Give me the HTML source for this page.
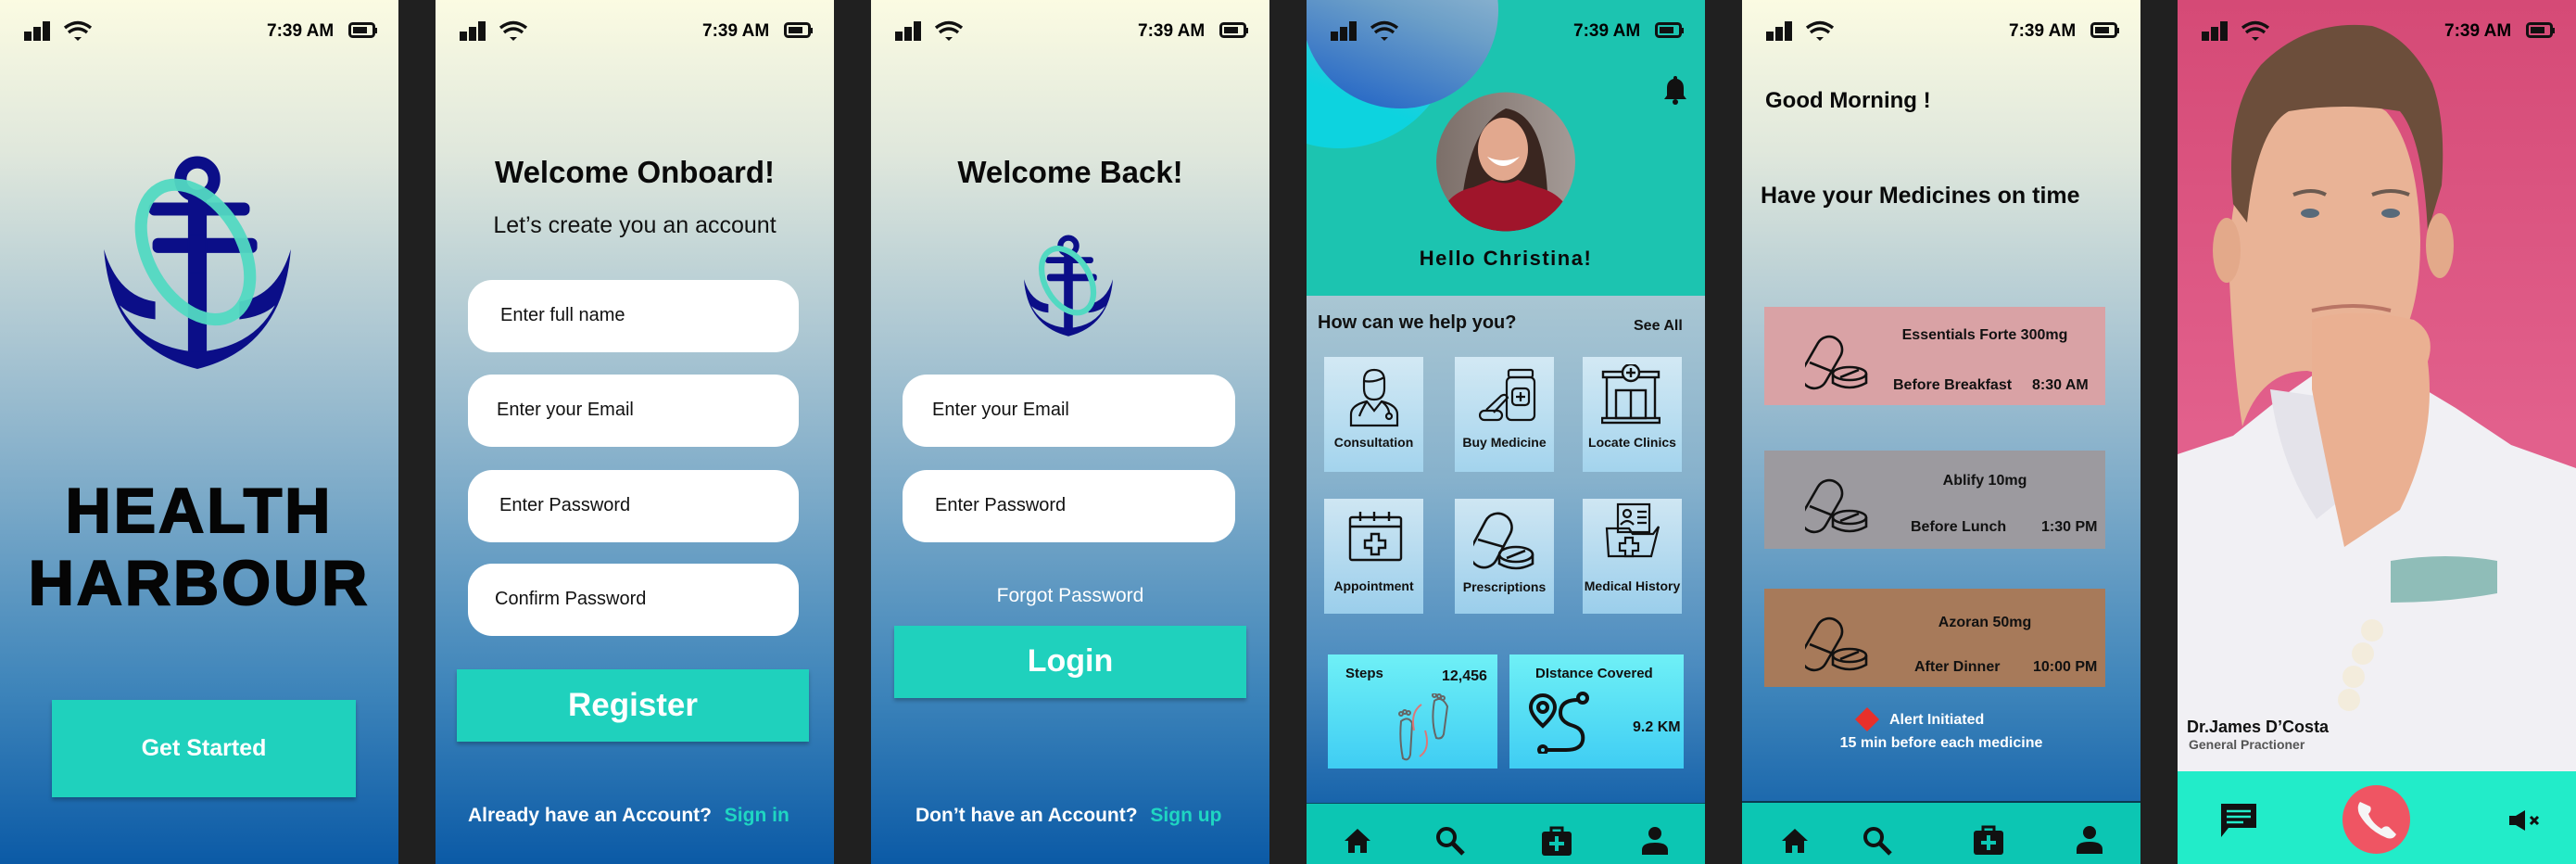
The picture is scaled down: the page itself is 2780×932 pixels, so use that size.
<!DOCTYPE html>
<html><head><meta charset="utf-8"><style>
*{margin:0;padding:0;box-sizing:border-box}
body{width:2780px;height:932px;background:#202020;position:relative;overflow:hidden;font-family:"Liberation Sans",sans-serif}
.s{position:absolute;top:0;height:932px;width:430px;overflow:hidden}
.g{background:linear-gradient(180deg,#fbfbe2 0%,#dfe7dc 18%,#a9c5d2 40%,#7aa9c8 58%,#3d84ba 80%,#0b5aa6 100%)}
.a{position:absolute}
.t{position:absolute;font-weight:bold;white-space:nowrap}
.inp{position:absolute;background:#fff;border-radius:26px;height:78px;width:357px}
.inp span{position:absolute;top:27px;font-size:20px;color:#111}
.btn{position:absolute;background:#1fd1bd;box-shadow:0 3px 4px rgba(0,0,0,.25);color:#fff;font-weight:bold;text-align:center}
.card{position:absolute;width:107px;height:124px;background:linear-gradient(180deg,rgba(220,240,250,.85),rgba(170,220,245,.8))}
.card b{position:absolute;left:0;right:0;text-align:center;font-size:14px;color:#111}
.card svg{position:absolute;left:26px;top:12px}
.med{position:absolute;left:24px;width:368px;height:106px}
.med b{position:absolute;font-size:16px;color:#111}
.hh{position:absolute;left:0;width:430px;text-align:center;font-size:68px;font-weight:900;letter-spacing:3px;white-space:nowrap;color:#050505;-webkit-text-stroke:2px #050505}
</style></head><body>

<!-- SCREEN 1 -->
<div class="s g" style="left:0">
 <svg class="a" style="left:26px;top:22px" width="82" height="24" viewBox="0 0 82 24"><rect x="0" y="12" width="8" height="10" fill="#111"/><rect x="10" y="7" width="8" height="15" fill="#111"/><rect x="20" y="1" width="8" height="21" fill="#111"/><path d="M44 8 Q58 -3 72 8" stroke="#111" stroke-width="3.5" fill="none"/><path d="M48 13 Q58 5 68 13" stroke="#111" stroke-width="3.5" fill="none"/><path d="M54 18 L58 22 L62 18 Z" fill="#111"/></svg>
 <div class="t" style="left:288px;top:23px;font-size:19px">7:39 AM</div>
 <svg class="a" style="left:376px;top:24px" width="32" height="18"><rect x="1.5" y="1.5" width="26" height="14" rx="3" stroke="#111" stroke-width="3" fill="none"/><rect x="5" y="5" width="15" height="7" fill="#111"/><rect x="28" y="6" width="3" height="6" fill="#111"/></svg>
 <svg class="a" style="left:112px;top:168px" width="202" height="230" viewBox="0 0 200 228">
  <circle cx="100" cy="25" r="18" stroke="#0b0e88" stroke-width="13" fill="none"/>
  <rect x="48" y="50" width="108" height="14" rx="6" fill="#0b0e88"/>
  <rect x="52" y="88" width="112" height="16" rx="6" fill="#0b0e88"/>
  <rect x="90" y="40" width="20" height="180" fill="#0b0e88"/>
  <path d="M0 100 Q8 205 100 228 Q192 205 200 100 Q185 150 145 156 L145 175 Q170 172 183 160 Q160 205 100 210 Q40 205 17 160 Q30 172 55 175 L55 156 Q15 150 0 100 Z" fill="#0b0e88"/>
  <ellipse cx="98" cy="103" rx="50" ry="78" transform="rotate(-30 98 103)" stroke="#52d9c2" stroke-width="13" fill="none" opacity=".95"/>
  <rect x="92" y="85" width="16" height="40" fill="#0b0e88"/>
 </svg>
 <div class="hh" style="top:512px">HEALTH</div>
 <div class="hh" style="top:590px">HARBOUR</div>
 <div class="btn" style="left:56px;top:755px;width:328px;height:105px;line-height:105px;font-size:25px">Get Started</div>
</div>

<!-- SCREEN 2 -->
<div class="s g" style="left:470px">
 <svg class="a" style="left:26px;top:22px" width="82" height="24" viewBox="0 0 82 24"><rect x="0" y="12" width="8" height="10" fill="#111"/><rect x="10" y="7" width="8" height="15" fill="#111"/><rect x="20" y="1" width="8" height="21" fill="#111"/><path d="M44 8 Q58 -3 72 8" stroke="#111" stroke-width="3.5" fill="none"/><path d="M48 13 Q58 5 68 13" stroke="#111" stroke-width="3.5" fill="none"/><path d="M54 18 L58 22 L62 18 Z" fill="#111"/></svg>
 <div class="t" style="left:288px;top:23px;font-size:19px">7:39 AM</div>
 <svg class="a" style="left:376px;top:24px" width="32" height="18"><rect x="1.5" y="1.5" width="26" height="14" rx="3" stroke="#111" stroke-width="3" fill="none"/><rect x="5" y="5" width="15" height="7" fill="#111"/><rect x="28" y="6" width="3" height="6" fill="#111"/></svg>
 <div class="t" style="left:0;width:430px;text-align:center;top:167px;font-size:33px;color:#0a0a0a">Welcome Onboard!</div>
 <div class="t" style="left:0;width:430px;text-align:center;top:229px;font-size:25px;font-weight:normal;color:#111">Let’s create you an account</div>
 <div class="inp" style="left:35px;top:302px"><span style="left:35px">Enter full name</span></div>
 <div class="inp" style="left:35px;top:404px"><span style="left:31px">Enter your Email</span></div>
 <div class="inp" style="left:35px;top:507px"><span style="left:34px">Enter Password</span></div>
 <div class="inp" style="left:35px;top:608px"><span style="left:29px">Confirm Password</span></div>
 <div class="btn" style="left:23px;top:722px;width:380px;height:78px;line-height:78px;font-size:35px">Register</div>
 <div class="t" style="left:35px;top:868px;font-size:21px;color:#fff">Already have an Account? <span style="color:#1fd6c2;margin-left:8px">Sign in</span></div>
</div>

<!-- SCREEN 3 -->
<div class="s g" style="left:940px">
 <svg class="a" style="left:26px;top:22px" width="82" height="24" viewBox="0 0 82 24"><rect x="0" y="12" width="8" height="10" fill="#111"/><rect x="10" y="7" width="8" height="15" fill="#111"/><rect x="20" y="1" width="8" height="21" fill="#111"/><path d="M44 8 Q58 -3 72 8" stroke="#111" stroke-width="3.5" fill="none"/><path d="M48 13 Q58 5 68 13" stroke="#111" stroke-width="3.5" fill="none"/><path d="M54 18 L58 22 L62 18 Z" fill="#111"/></svg>
 <div class="t" style="left:288px;top:23px;font-size:19px">7:39 AM</div>
 <svg class="a" style="left:376px;top:24px" width="32" height="18"><rect x="1.5" y="1.5" width="26" height="14" rx="3" stroke="#111" stroke-width="3" fill="none"/><rect x="5" y="5" width="15" height="7" fill="#111"/><rect x="28" y="6" width="3" height="6" fill="#111"/></svg>
 <div class="t" style="left:0;width:430px;text-align:center;top:167px;font-size:33px;color:#0a0a0a">Welcome Back!</div>
 <svg class="a" style="left:165px;top:253px" width="96" height="110" viewBox="0 0 200 228">
  <circle cx="100" cy="25" r="18" stroke="#0b0e88" stroke-width="13" fill="none"/>
  <rect x="48" y="50" width="108" height="14" rx="6" fill="#0b0e88"/>
  <rect x="52" y="88" width="112" height="16" rx="6" fill="#0b0e88"/>
  <rect x="90" y="40" width="20" height="180" fill="#0b0e88"/>
  <path d="M0 100 Q8 205 100 228 Q192 205 200 100 Q185 150 145 156 L145 175 Q170 172 183 160 Q160 205 100 210 Q40 205 17 160 Q30 172 55 175 L55 156 Q15 150 0 100 Z" fill="#0b0e88"/>
  <ellipse cx="98" cy="103" rx="50" ry="78" transform="rotate(-30 98 103)" stroke="#52d9c2" stroke-width="13" fill="none"/>
 </svg>
 <div class="inp" style="left:34px;top:404px;width:359px"><span style="left:32px">Enter your Email</span></div>
 <div class="inp" style="left:34px;top:507px;width:359px"><span style="left:35px">Enter Password</span></div>
 <div class="t" style="left:0;width:430px;text-align:center;top:631px;font-size:21px;font-weight:normal;color:#fff">Forgot Password</div>
 <div class="btn" style="left:25px;top:675px;width:380px;height:78px;line-height:76px;font-size:34px">Login</div>
 <div class="t" style="left:48px;top:868px;font-size:21px;color:#fff">Don’t have an Account? <span style="color:#1fd6c2;margin-left:8px">Sign up</span></div>
</div>

<!-- SCREEN 4 -->
<div class="s" style="left:1410px;background:linear-gradient(180deg,#a9c6d3 320px,#86b1cc 520px,#4b8bbf 720px,#1864ab 866px)">
 <div class="a" style="left:0;top:0;width:430px;height:319px;background:#1cc4b0"></div>
 <div class="a" style="left:-90px;top:-90px;width:250px;height:250px;border-radius:50%;background:linear-gradient(200deg,#8fb7d6,#0dd3df 70%)"></div>
 <div class="a" style="left:-5px;top:-95px;width:212px;height:212px;border-radius:50%;background:linear-gradient(200deg,#a8c5d5 10%,#6c9fc8 50%,#1a5ec6 100%)"></div>
 <svg class="a" style="left:26px;top:22px" width="82" height="24" viewBox="0 0 82 24"><rect x="0" y="12" width="8" height="10" fill="#111"/><rect x="10" y="7" width="8" height="15" fill="#111"/><rect x="20" y="1" width="8" height="21" fill="#111"/><path d="M44 8 Q58 -3 72 8" stroke="#111" stroke-width="3.5" fill="none"/><path d="M48 13 Q58 5 68 13" stroke="#111" stroke-width="3.5" fill="none"/><path d="M54 18 L58 22 L62 18 Z" fill="#111"/></svg>
 <div class="t" style="left:288px;top:23px;font-size:19px">7:39 AM</div>
 <svg class="a" style="left:376px;top:24px" width="32" height="18"><rect x="1.5" y="1.5" width="26" height="14" rx="3" stroke="#111" stroke-width="3" fill="none"/><rect x="5" y="5" width="15" height="7" fill="#111"/><rect x="28" y="6" width="3" height="6" fill="#111"/></svg>
 <svg class="a" style="left:385px;top:80px" width="26" height="34" viewBox="0 0 26 34"><path d="M13 2 a2 2 0 0 1 2 2 v1 c5 1.5 7 5 7 10 v8 l3 4 H1 l3 -4 v-8 c0 -5 2 -8.5 7 -10 V4 a2 2 0 0 1 2 -2z" fill="#111"/><circle cx="13" cy="30" r="3" fill="#111"/></svg>
 <svg class="a" style="left:140px;top:99px" width="150" height="151" viewBox="0 0 150 151">
  <defs><clipPath id="cp"><circle cx="75" cy="75.5" r="75"/></clipPath><linearGradient id="bgp" x1="0" y1="0" x2="1" y2="0"><stop offset="0" stop-color="#7c6f69"/><stop offset="1" stop-color="#a49a96"/></linearGradient></defs>
  <g clip-path="url(#cp)"><rect width="150" height="151" fill="url(#bgp)"/>
  <path d="M25 151 Q30 40 75 18 Q125 25 120 151Z" fill="#3a2620"/>
  <ellipse cx="72" cy="62" rx="27" ry="34" fill="#e2a88e"/>
  <path d="M55 70 Q72 90 90 70 Q72 78 55 70Z" fill="#fff"/>
  <path d="M0 151 Q5 110 40 103 L60 95 Q75 102 88 95 L110 103 Q145 112 150 151Z" fill="#a0152b"/></g>
 </svg>
 <div class="t" style="left:0;width:430px;text-align:center;top:266px;font-size:22px;letter-spacing:1.5px;color:#0a0a0a">Hello Christina!</div>
 <div class="t" style="left:12px;top:337px;font-size:20px;color:#111">How can we help you?</div>
 <div class="t" style="left:353px;top:343px;font-size:16px;color:#111">See All</div>

 <div class="card" style="left:19px;top:385px"><svg width="56" height="64" viewBox="0 0 56 64" fill="none" stroke="#111" stroke-width="2.2"><path d="M17 14 Q17 2 28 2 Q39 2 39 14 V22 Q39 34 28 34 Q17 34 17 22Z"/><path d="M17 14 Q28 16 39 10"/><path d="M3 62 V50 Q3 40 20 36 L28 46 L36 36 Q53 40 53 50 V62Z"/><path d="M20 36 Q14 46 12 52"/><circle cx="44" cy="52" r="3"/><path d="M36 36 Q44 42 44 49"/></svg><b style="top:84px">Consultation</b></div>
 <div class="card" style="left:160px;top:385px"><svg width="64" height="60" viewBox="0 0 64 60" fill="none" stroke="#111" stroke-width="2.2"><rect x="32" y="2" width="26" height="8" rx="2"/><rect x="30" y="10" width="30" height="46" rx="5"/><rect x="36" y="22" width="18" height="18" rx="4"/><path d="M45 26 v10 M40 31 h10"/><path d="M8 45 L24 30 Q29 27 31 32 L16 48"/><rect x="1" y="46" width="24" height="10" rx="5"/></svg><b style="top:84px">Buy Medicine</b></div>
 <div class="card" style="left:298px;top:385px"><svg width="64" height="66" viewBox="0 0 64 66" fill="none" stroke="#111" stroke-width="2.4" style="left:20px;top:8px"><rect x="2" y="8" width="60" height="6"/><circle cx="32" cy="9" r="9" fill="#cde8f4"/><path d="M32 4 v10 M27 9 h10"/><path d="M6 14 V58 M58 14 V58"/><rect x="16" y="28" width="32" height="30"/><path d="M32 28 V58"/><rect x="1" y="58" width="62" height="5"/></svg><b style="top:84px">Locate Clinics</b></div>
 <div class="card" style="left:19px;top:538px"><svg width="60" height="58" viewBox="0 0 60 58" fill="none" stroke="#111" stroke-width="2.4"><rect x="2" y="8" width="55" height="46" rx="2"/><path d="M2 18 H57"/><path d="M13 2 v10 M28 2 v10 M44 2 v10"/><path d="M25 26 h8 v7 h7 v8 h-7 v7 h-8 v-7 h-7 v-8 h7z"/></svg><b style="top:86px">Appointment</b></div>
 <div class="card" style="left:160px;top:538px"><svg width="66" height="66" viewBox="0 0 66 66" fill="none" stroke="#111" stroke-width="2.6" style="left:20px;top:12px"><rect x="4" y="2" width="30" height="62" rx="15" transform="rotate(28 19 33)"/><path d="M5 32 L33 40"/><ellipse cx="46" cy="48" rx="18" ry="8"/><path d="M28 48 v10 Q46 68 64 58 V48"/><path d="M36 52 L56 44"/></svg><b style="top:87px">Prescriptions</b></div>
 <div class="card" style="left:298px;top:538px"><svg width="60" height="60" viewBox="0 0 60 60" fill="none" stroke="#111" stroke-width="2.2" style="left:24px;top:4px"><rect x="14" y="2" width="34" height="30"/><circle cx="24" cy="12" r="4"/><path d="M17 24 Q24 16 31 24 M35 10 h10 M35 16 h10 M35 22 h10"/><path d="M2 28 H26 L30 34 H52 L58 26 L50 58 H4Z"/><path d="M22 38 h8 v6 h6 v8 h-6 v6 h-8 v-6 h-6 v-8 h6z"/></svg><b style="top:86px">Medical History</b></div>

 <div class="a" style="left:23px;top:706px;width:183px;height:123px;background:linear-gradient(180deg,#6ff0f6,#3fcdf3)"></div>
 <div class="t" style="left:42px;top:718px;font-size:15px;color:#111">Steps</div>
 <div class="t" style="left:146px;top:721px;font-size:16px;color:#111">12,456</div>
 <svg class="a" style="left:96px;top:748px" width="66" height="74" viewBox="0 0 66 74" fill="none" stroke="#666" stroke-width="2"><path d="M6 30 Q4 50 8 70 Q14 74 16 66 L18 32 Q14 24 6 30Z"/><path d="M42 8 Q38 30 44 48 Q50 50 52 44 L56 14 Q50 2 42 8Z"/><circle cx="6" cy="22" r="2"/><circle cx="10" cy="20" r="2"/><circle cx="14" cy="21" r="2"/><circle cx="42" cy="2" r="2"/><circle cx="47" cy="3" r="2"/><circle cx="51" cy="5" r="2"/><path d="M28 12 Q16 20 20 40 M32 40 Q38 60 26 68" stroke="#d77" /></svg>
 <div class="a" style="left:219px;top:706px;width:188px;height:123px;background:linear-gradient(180deg,#6ff0f6,#3fcdf3)"></div>
 <div class="t" style="left:247px;top:718px;font-size:15px;color:#111">DIstance Covered</div>
 <svg class="a" style="left:240px;top:745px" width="75" height="68" viewBox="0 0 75 68" fill="none" stroke="#111" stroke-width="4"><path d="M15 38 Q2 26 2 18 a13 13 0 0 1 26 0 Q28 26 15 38Z"/><circle cx="15" cy="18" r="5"/><circle cx="58" cy="8" r="5"/><path d="M53 10 Q34 10 34 24 Q34 34 48 38 Q60 42 58 54 Q56 64 40 64 H20"/><circle cx="15" cy="64" r="4"/></svg>
 <div class="t" style="left:352px;top:776px;font-size:16px;color:#111">9.2 KM</div>

 <div class="a" style="left:0;top:866px;width:430px;height:66px;background:#0cc6b3;border-top:1px solid #0a4a60"></div>
 <svg class="a" style="left:40px;top:893px" width="30" height="28" viewBox="0 0 30 28"><path d="M15 1 L1 14 H5 V27 H12 V19 H18 V27 H25 V14 H29Z" fill="#111"/></svg>
 <svg class="a" style="left:139px;top:891px" width="32" height="32" viewBox="0 0 32 32" fill="none" stroke="#111" stroke-width="4"><circle cx="12" cy="12" r="9"/><path d="M19 19 L30 30" stroke-width="5"/></svg>
 <svg class="a" style="left:253px;top:890px" width="34" height="34" viewBox="0 0 34 34"><path d="M11 7 V3 H23 V7" stroke="#111" stroke-width="3" fill="none"/><rect x="1" y="7" width="32" height="26" rx="3" fill="#111"/><path d="M17 12 v16 M9 20 h16" stroke="#0cc6b3" stroke-width="4"/></svg>
 <svg class="a" style="left:361px;top:891px" width="30" height="32" viewBox="0 0 30 32"><circle cx="15" cy="8" r="7" fill="#111"/><path d="M1 31 V26 Q1 18 15 18 Q29 18 29 26 V31Z" fill="#111"/></svg>
</div>

<!-- SCREEN 5 -->
<div class="s g" style="left:1880px">
 <svg class="a" style="left:26px;top:22px" width="82" height="24" viewBox="0 0 82 24"><rect x="0" y="12" width="8" height="10" fill="#111"/><rect x="10" y="7" width="8" height="15" fill="#111"/><rect x="20" y="1" width="8" height="21" fill="#111"/><path d="M44 8 Q58 -3 72 8" stroke="#111" stroke-width="3.5" fill="none"/><path d="M48 13 Q58 5 68 13" stroke="#111" stroke-width="3.5" fill="none"/><path d="M54 18 L58 22 L62 18 Z" fill="#111"/></svg>
 <div class="t" style="left:288px;top:23px;font-size:19px">7:39 AM</div>
 <svg class="a" style="left:376px;top:24px" width="32" height="18"><rect x="1.5" y="1.5" width="26" height="14" rx="3" stroke="#111" stroke-width="3" fill="none"/><rect x="5" y="5" width="15" height="7" fill="#111"/><rect x="28" y="6" width="3" height="6" fill="#111"/></svg>
 <div class="t" style="left:25px;top:95px;font-size:24px;color:#0a0a0a">Good Morning !</div>
 <div class="t" style="left:20px;top:197px;font-size:25px;color:#0a0a0a">Have your Medicines on time</div>

 <div class="med" style="top:331px;background:#d9a2a5"><svg class="a" style="left:44px;top:28px" width="68" height="64" viewBox="0 0 68 64" fill="none" stroke="#111" stroke-width="2.6"><rect x="4" y="2" width="28" height="60" rx="14" transform="rotate(30 18 32)"/><path d="M5 32 L30 42"/><ellipse cx="48" cy="44" rx="18" ry="7"/><path d="M30 44 v10 Q48 64 66 54 V44"/><path d="M38 48 L58 40"/></svg><b style="left:0;width:476px;text-align:center;top:22px">Essentials Forte 300mg</b><b style="left:139px;top:76px">Before Breakfast</b><b style="left:289px;top:76px">8:30 AM</b></div>
 <div class="med" style="top:486px;background:#9c9a9f"><svg class="a" style="left:44px;top:28px" width="68" height="64" viewBox="0 0 68 64" fill="none" stroke="#111" stroke-width="2.6"><rect x="4" y="2" width="28" height="60" rx="14" transform="rotate(30 18 32)"/><path d="M5 32 L30 42"/><ellipse cx="48" cy="44" rx="18" ry="7"/><path d="M30 44 v10 Q48 64 66 54 V44"/><path d="M38 48 L58 40"/></svg><b style="left:0;width:476px;text-align:center;top:24px">Ablify 10mg</b><b style="left:158px;top:74px">Before Lunch</b><b style="left:299px;top:74px">1:30 PM</b></div>
 <div class="med" style="top:635px;background:#a77a5a"><svg class="a" style="left:44px;top:28px" width="68" height="64" viewBox="0 0 68 64" fill="none" stroke="#111" stroke-width="2.6"><rect x="4" y="2" width="28" height="60" rx="14" transform="rotate(30 18 32)"/><path d="M5 32 L30 42"/><ellipse cx="48" cy="44" rx="18" ry="7"/><path d="M30 44 v10 Q48 64 66 54 V44"/><path d="M38 48 L58 40"/></svg><b style="left:0;width:476px;text-align:center;top:28px">Azoran 50mg</b><b style="left:162px;top:76px">After Dinner</b><b style="left:290px;top:76px">10:00 PM</b></div>

 <svg class="a" style="left:122px;top:763px" width="26" height="26" viewBox="0 0 26 26"><path d="M13 0 L26 13 L13 26 L0 13Z" fill="#e8302a"/></svg>
 <div class="t" style="left:159px;top:768px;font-size:16px;color:#fff">Alert Initiated</div>
 <div class="t" style="left:0;width:430px;text-align:center;top:793px;font-size:16px;color:#fff">15 min before each medicine</div>

 <div class="a" style="left:0;top:864px;width:430px;height:68px;background:#0cc6b3;border-top:2px solid #0a3a50"></div>
 <svg class="a" style="left:42px;top:893px" width="30" height="28" viewBox="0 0 30 28"><path d="M15 1 L1 14 H5 V27 H12 V19 H18 V27 H25 V14 H29Z" fill="#111"/></svg>
 <svg class="a" style="left:130px;top:891px" width="32" height="32" viewBox="0 0 32 32" fill="none" stroke="#111" stroke-width="4"><circle cx="12" cy="12" r="9"/><path d="M19 19 L30 30" stroke-width="5"/></svg>
 <svg class="a" style="left:249px;top:889px" width="34" height="34" viewBox="0 0 34 34"><path d="M11 7 V3 H23 V7" stroke="#111" stroke-width="3" fill="none"/><rect x="1" y="7" width="32" height="26" rx="3" fill="#111"/><path d="M17 12 v16 M9 20 h16" stroke="#0cc6b3" stroke-width="4"/></svg>
 <svg class="a" style="left:360px;top:890px" width="30" height="32" viewBox="0 0 30 32"><circle cx="15" cy="8" r="7" fill="#111"/><path d="M1 31 V26 Q1 18 15 18 Q29 18 29 26 V31Z" fill="#111"/></svg>
</div>

<!-- SCREEN 6 -->
<div class="s" style="left:2350px;background:linear-gradient(180deg,#d54a76,#e2608c 50%,#dd5a86)">
 <svg class="a" style="left:0;top:0" width="430" height="832" viewBox="0 0 430 832">
  <path d="M0 490 L60 470 L110 430 L160 395 L200 420 L250 410 L300 440 L360 480 L430 505 V832 H0Z" fill="#f1f0f4"/>
  <path d="M100 420 Q110 500 150 560 L200 520 L170 430Z" fill="#e4e3ea"/>
  <path d="M70 460 Q60 400 55 280 Q60 150 120 110 Q180 90 225 120 Q260 160 262 260 Q262 350 225 390 Q180 410 140 400 Q90 400 70 460Z" fill="#e9b396"/>
  <path d="M60 220 Q50 120 90 70 Q140 20 210 28 Q250 40 275 90 Q290 130 285 200 L270 250 Q265 150 240 120 Q180 110 120 120 Q85 140 75 240Z" fill="#6c4e3b"/>
  <ellipse cx="53" cy="270" rx="15" ry="35" fill="#e3a98a"/>
  <ellipse cx="283" cy="265" rx="15" ry="35" fill="#e3a98a"/>
  <path d="M145 345 Q190 330 255 345 Q280 360 270 390 Q280 470 240 550 L180 590 Q160 500 145 420Z" fill="#eab092"/>
  <path d="M125 210 Q145 202 160 210 M210 210 Q230 202 250 210" stroke="#6b5a50" stroke-width="4" fill="none"/>
  <ellipse cx="143" cy="230" rx="10" ry="5" fill="#586a7a"/><ellipse cx="230" cy="230" rx="10" ry="5" fill="#586a7a"/>
  <path d="M145 335 Q190 325 230 335" stroke="#b97565" stroke-width="4" fill="none"/>
  <path d="M230 605 Q290 595 345 605 L345 640 Q290 650 230 650Z" fill="#8fbdb8"/>
  <circle cx="210" cy="680" r="12" fill="#f3ecdc"/><circle cx="200" cy="705" r="12" fill="#f3ecdc"/><circle cx="190" cy="730" r="12" fill="#f3ecdc"/><circle cx="185" cy="755" r="12" fill="#f3ecdc"/>
 </svg>
 <svg class="a" style="left:26px;top:22px" width="82" height="24" viewBox="0 0 82 24"><rect x="0" y="12" width="8" height="10" fill="#111"/><rect x="10" y="7" width="8" height="15" fill="#111"/><rect x="20" y="1" width="8" height="21" fill="#111"/><path d="M44 8 Q58 -3 72 8" stroke="#111" stroke-width="3.5" fill="none"/><path d="M48 13 Q58 5 68 13" stroke="#111" stroke-width="3.5" fill="none"/><path d="M54 18 L58 22 L62 18 Z" fill="#111"/></svg>
 <div class="t" style="left:288px;top:23px;font-size:19px">7:39 AM</div>
 <svg class="a" style="left:376px;top:24px" width="32" height="18"><rect x="1.5" y="1.5" width="26" height="14" rx="3" stroke="#111" stroke-width="3" fill="none"/><rect x="5" y="5" width="15" height="7" fill="#111"/><rect x="28" y="6" width="3" height="6" fill="#111"/></svg>
 <div class="t" style="left:10px;top:774px;font-size:18px;color:#111">Dr.James D’Costa</div>
 <div class="t" style="left:12px;top:795px;font-size:14px;color:#555">General Practioner</div>
 <div class="a" style="left:0;top:832px;width:430px;height:100px;background:#22ecc9"></div>
 <svg class="a" style="left:45px;top:865px" width="42" height="40" viewBox="0 0 42 40"><path d="M2 2 H40 V28 H10 L2 38Z" fill="#111"/><path d="M8 10 H34 M8 16 H34 M8 22 H26" stroke="#22ecc9" stroke-width="2.5"/></svg>
 <div class="a" style="left:178px;top:847px;width:73px;height:74px;border-radius:50%;background:#ef5563"></div>
 <svg class="a" style="left:192px;top:862px" width="46" height="44" viewBox="0 0 46 44"><path d="M5 3 Q1 8 4 16 Q14 34 34 42 Q41 44 44 38 L36 30 Q32 28 28 32 Q18 26 14 16 Q18 12 16 8Z" fill="#f5f5f5"/></svg>
 <svg class="a" style="left:357px;top:873px" width="36" height="24" viewBox="0 0 36 24"><path d="M1 7 H8 L18 1 V23 L8 17 H1Z" fill="#111"/><path d="M24 8 L32 16 M32 8 L24 16" stroke="#111" stroke-width="3"/></svg>
</div>
</body></html>
